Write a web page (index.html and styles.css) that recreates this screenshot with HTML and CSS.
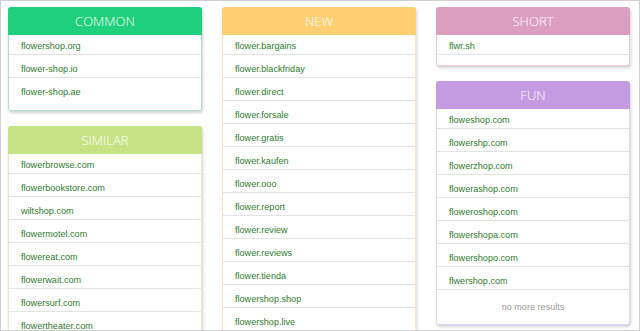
FILE: index.html
```html
<!DOCTYPE html>
<html lang="en">
<head>
    <meta charset="UTF-8">
    <meta name="viewport" content="width=device-width, initial-scale=1.0">
    <title>Flower Shop Domains</title>
    <link rel="stylesheet" href="styles.css">
</head>
<body>
    <div class="frame">
        <div class="column">
            <div class="card card-common">
                <div class="card-title">COMMON</div>
                <ul class="domains">
                    <li>flowershop.org</li>
                    <li>flower-shop.io</li>
                    <li>flower-shop.ae</li>
                </ul>
            </div>
            <div class="card card-similar">
                <div class="card-title">SIMILAR</div>
                <ul class="domains">
                    <li>flowerbrowse.com</li>
                    <li>flowerbookstore.com</li>
                    <li>wiltshop.com</li>
                    <li>flowermotel.com</li>
                    <li>flowereat.com</li>
                    <li>flowerwait.com</li>
                    <li>flowersurf.com</li>
                    <li>flowertheater.com</li>
                </ul>
            </div>
        </div>
        <div class="column">
            <div class="card card-new">
                <div class="card-title">NEW</div>
                <ul class="domains">
                    <li>flower.bargains</li>
                    <li>flower.blackfriday</li>
                    <li>flower.direct</li>
                    <li>flower.forsale</li>
                    <li>flower.gratis</li>
                    <li>flower.kaufen</li>
                    <li>flower.ooo</li>
                    <li>flower.report</li>
                    <li>flower.review</li>
                    <li>flower.reviews</li>
                    <li>flower.tienda</li>
                    <li>flowershop.shop</li>
                    <li>flowershop.live</li>
                </ul>
            </div>
        </div>
        <div class="column">
            <div class="card card-short">
                <div class="card-title">SHORT</div>
                <ul class="domains">
                    <li class="lined">flwr.sh</li>
                </ul>
            </div>
            <div class="card card-fun">
                <div class="card-title">FUN</div>
                <ul class="domains">
                    <li>floweshop.com</li>
                    <li>flowershp.com</li>
                    <li>flowerzhop.com</li>
                    <li>flowerashop.com</li>
                    <li>floweroshop.com</li>
                    <li>flowershopa.com</li>
                    <li>flowershopo.com</li>
                    <li class="lined">flwershop.com</li>
                    <li class="no-more">no more results</li>
                </ul>
            </div>
        </div>
    </div>
</body>
</html>
```

FILE: styles.css
```css
body {
    margin: 0;
    padding: 0;
    background: #fff;
    font-family: "Liberation Sans", Arial, sans-serif;
}
.frame {
    width: 640px;
    height: 331px;
    box-sizing: border-box;
    border: 1px solid #cfcfcf;
    padding: 6px 9px 6px 7px;
    overflow: hidden;
    display: flex;
    gap: 20px;
    align-items: flex-start;
}
.column {
    flex: 1;
    min-width: 0;
    display: flex;
    flex-direction: column;
    gap: 15px;
}
.card {
    border: 1px solid #ddd;
    border-radius: 3px;
    background: #fff;
    box-shadow: 1px 2px 3px rgba(0, 0, 0, 0.18);
    padding-bottom: 10px;
}
.card-title {
    margin: -1px -1px 0;
    height: 28px;
    line-height: 28px;
    text-align: center;
    color: #fff;
    font-family: "Open Sans", sans-serif;
    font-weight: 300;
    font-size: 13px;
    border-radius: 3px 3px 0 0;
}
.domains {
    list-style: none;
    margin: 0;
    padding: 0;
}
.domains li {
    padding: 7px 12px 1px;
    line-height: 14px;
    font-size: 9.1px;
    color: #2f7a2f;
    border-bottom: 1px solid #e3e3e3;
}
.domains li:first-child {
    padding-top: 4px;
}
.domains li:last-child {
    border-bottom: none;
}
.domains li.lined {
    border-bottom: 1px solid #e3e3e3;
}
.domains li.no-more {
    padding: 10px 12px 0;
    text-align: center;
    color: #9a9a9a;
}
.card-common {
    border-color: #a9e1c3;
}
.card-common .card-title {
    background: #1fcf7b;
}
.card-similar {
    border-color: #dcefbf;
}
.card-similar .card-title {
    background: #c5e384;
}
.card-new {
    border-color: #fbe7bf;
}
.card-new .card-title {
    background: #fecf71;
}
.card-short {
    border-color: #eccadb;
}
.card-short .card-title {
    background: #dc9ebf;
}
.card-fun {
    border-color: #e2d0f1;
}
.card-fun .card-title {
    background: #c49be0;
}
```
